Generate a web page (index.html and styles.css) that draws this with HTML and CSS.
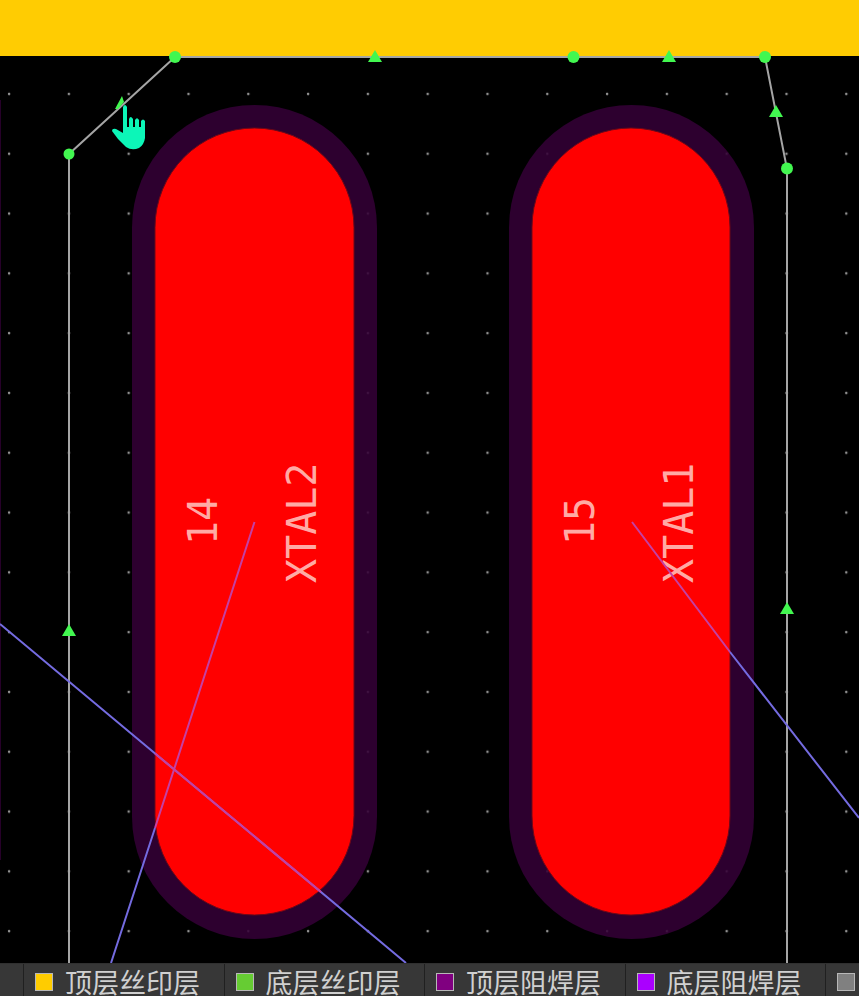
FILE: index.html
```html
<!DOCTYPE html>
<html lang="zh-CN">
<head>
<meta charset="utf-8">
<meta name="viewport" content="width=device-width, initial-scale=1">
<title>PCB</title>
<link rel="stylesheet" href="styles.css">
</head>
<body>
<main class="board">
<svg class="canvas" viewBox="0 0 859 963" preserveAspectRatio="xMinYMin slice">
  <defs>
    <pattern id="grid" x="-20.9" y="64" width="59.8" height="59.8" patternUnits="userSpaceOnUse">
      <circle class="dot" cx="30" cy="30" r="1.3"/>
    </pattern>
    <path id="mid" d="M0-6 7 6H-7Z"/>
  </defs>
  <rect class="grid" y="64" width="859" height="899"/>
  <rect class="silk" width="859" height="56"/>
  <path class="edge" d="M0 100V860"/>
  <g class="mask">
    <rect x="132" y="105" width="245" height="834" rx="122.5"/>
    <rect x="509" y="105" width="245" height="834" rx="122.5"/>
  </g>
  <g class="pad">
    <rect x="155" y="128" width="199" height="787" rx="99.5"/>
    <rect x="532" y="128" width="198" height="787" rx="99"/>
  </g>
  <g class="label">
    <text transform="translate(217 545) rotate(-90)">14</text>
    <text transform="translate(316 583) rotate(-90)">XTAL2</text>
    <text transform="translate(594 545) rotate(-90)">15</text>
    <text transform="translate(693 583) rotate(-90)">XTAL1</text>
  </g>
  <path class="outline" d="M69 963V154L175 57H765L787 169V963"/>
  <path class="net" d="M0 624 406 963M155 828 111 963M730 652 859 818"/>
  <path class="net-over" d="M254.500 522 155 828M155 753.500 321 892M632 522 730 652"/>
  <g class="node">
    <circle cx="69" cy="154" r="5.500"/>
    <circle cx="175" cy="57" r="6"/>
    <circle cx="573.500" cy="57" r="6"/>
    <circle cx="765" cy="57" r="6"/>
    <circle cx="787" cy="168.500" r="6"/>
    <use href="#mid" x="375" y="56"/>
    <use href="#mid" x="669" y="56"/>
    <use href="#mid" x="776" y="111"/>
    <use href="#mid" x="787" y="608"/>
    <use href="#mid" x="69" y="630"/>
    <path d="M115 109 122 96 124 102 118 109Z"/>
  </g>
  <path class="hand" d="M123 107Q125 103 127 107V127H129V119Q130.500 115 133 119V127H135V120Q137 116.500 139 120V127H141V121Q143 118 145 121V138Q144 145 139 148Q132 151 126 147L118 139 112 131Q112 128 116 129L123 133Z"/>
</svg>
</main>
<nav class="layers">
  <span class="layer-start"></span>
  <button class="layer" type="button"><i class="swatch yellow"></i>顶层丝印层</button>
  <button class="layer" type="button"><i class="swatch green"></i>底层丝印层</button>
  <button class="layer" type="button"><i class="swatch purple"></i>顶层阻焊层</button>
  <button class="layer" type="button"><i class="swatch violet"></i>底层阻焊层</button>
  <button class="layer" type="button" aria-label="layer"><i class="swatch gray"></i></button>
</nav>
</body>
</html>
```
FILE: styles.css
```css
* { box-sizing: border-box; }
body {
  margin: 0;
  height: 100vh;
  display: flex;
  flex-direction: column;
  overflow: hidden;
  background: #000;
}
.board { flex: 1; min-height: 0; }
.canvas { display: block; width: 100%; height: 100%; }
.dot { fill: #929292; }
.grid { fill: url(#grid); }
.silk { fill: #ffcc02; }
.edge { stroke: #260029; stroke-width: 2; }
.mask { fill: #330035; fill-opacity: .88; }
.pad { fill: #ff0000; stroke: #6c0818; stroke-width: 1; }
.label {
  fill: #ffaaa5;
  font-family: "DejaVu Sans Mono", monospace;
  font-size: 40px;
}
.outline { fill: none; stroke: #a5a5a5; stroke-width: 2; }
.net { fill: none; stroke: #746be0; stroke-width: 2; }
.net-over { fill: none; stroke: #c440a4; stroke-width: 2; }
.node { fill: #42f750; }
.hand { fill: #0cf6b8; }
.layers {
  display: grid;
  grid-template-columns: 23px repeat(4, 1fr) 34px;
  height: 33px;
  flex: none;
  background: #373737;
  border-top: 1px solid #303030;
}
.layer {
  display: flex;
  align-items: center;
  gap: 12px;
  min-width: 0;
  margin: 0;
  padding: 4px 0 0 11px;
  border: 0;
  border-left: 1px solid #202020;
  background: transparent;
  color: #d0d0d0;
  font-family: "Noto Sans CJK SC", sans-serif;
  font-weight: 400;
  font-size: 27px;
  line-height: 28px;
  white-space: nowrap;
}
.swatch { flex: none; width: 18px; height: 18px; border: 1px solid #b8b8b8; }
.yellow { background: #ffcc00; }
.green { background: #66cc33; }
.purple { background: #800080; }
.violet { background: #aa00ff; }
.gray { background: #808080; }
```
